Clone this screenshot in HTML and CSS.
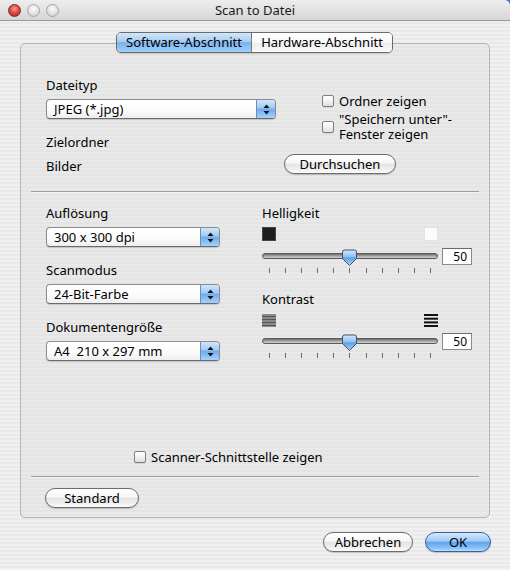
FILE: index.html
```html
<!DOCTYPE html>
<html lang="de">
<head>
<meta charset="utf-8">
<title>Scan to Datei</title>
<link rel="stylesheet" href="styles.css">
</head>
<body>
<div class="window">
  <div class="titlebar">
    <div class="lights">
      <span class="light red"></span>
      <span class="light gray"></span>
      <span class="light gray"></span>
    </div>
    <div class="title">Scan to Datei</div>
    <div></div>
  </div>

  <div class="content">
    <div class="tabs">
      <div class="tab active">Software-Abschnitt</div>
      <div class="tab">Hardware-Abschnitt</div>
    </div>

    <div class="group">
      <div class="sec-top">
        <div class="col-left">
          <div class="label">Dateityp</div>
          <div class="popup wide"><span class="popup-text">JPEG (*.jpg)</span><span class="popup-arrow"><svg width="7" height="11" viewBox="0 0 7 11"><path d="M3.5 0.5 L6.5 4 H0.5 Z M0.5 7 H6.5 L3.5 10.5 Z" fill="#111"/></svg></span></div>
          <div class="label gap15">Zielordner</div>
          <div class="label gap8">Bilder</div>
        </div>
        <div class="col-right">
          <label class="check first"><span class="box"></span><span>Ordner zeigen</span></label>
          <label class="check two"><span class="box"></span><span class="two-line">"Speichern unter"-<br>Fenster zeigen</span></label>
          <button class="btn browse">Durchsuchen</button>
        </div>
      </div>

      <div class="divider"></div>

      <div class="sec-bottom">
        <div class="col-popups">
          <div class="field">
            <div class="label">Auflösung</div>
            <div class="popup"><span class="popup-text">300 x 300 dpi</span><span class="popup-arrow"><svg width="7" height="11" viewBox="0 0 7 11"><path d="M3.5 0.5 L6.5 4 H0.5 Z M0.5 7 H6.5 L3.5 10.5 Z" fill="#111"/></svg></span></div>
          </div>
          <div class="field">
            <div class="label">Scanmodus</div>
            <div class="popup"><span class="popup-text">24-Bit-Farbe</span><span class="popup-arrow"><svg width="7" height="11" viewBox="0 0 7 11"><path d="M3.5 0.5 L6.5 4 H0.5 Z M0.5 7 H6.5 L3.5 10.5 Z" fill="#111"/></svg></span></div>
          </div>
          <div class="field">
            <div class="label">Dokumentengröße</div>
            <div class="popup"><span class="popup-text">A4&nbsp; 210 x 297 mm</span><span class="popup-arrow"><svg width="7" height="11" viewBox="0 0 7 11"><path d="M3.5 0.5 L6.5 4 H0.5 Z M0.5 7 H6.5 L3.5 10.5 Z" fill="#111"/></svg></span></div>
          </div>
        </div>

        <div class="col-sliders">
          <div class="label">Helligkeit</div>
          <div class="icons">
            <span class="sq black"></span>
            <span class="sq white"></span>
          </div>
          <div class="slider-row">
            <div class="slider">
              <div class="track"></div>
              <svg class="knob" width="17" height="18" viewBox="0 0 17 18"><defs><linearGradient id="kg1" x1="0" y1="0" x2="0" y2="1"><stop offset="0" stop-color="#d4e8fb"/><stop offset="0.45" stop-color="#8fc0f0"/><stop offset="0.5" stop-color="#5c9fe6"/><stop offset="1" stop-color="#a6d6ff"/></linearGradient></defs><path d="M3.5 1 H13.5 Q15.5 1 15.5 3 V9.5 L8.5 16.5 L1.5 9.5 V3 Q1.5 1 3.5 1 Z" fill="url(#kg1)" stroke="#3b5370" stroke-width="1"/></svg>
              <div class="ticks"><i></i><i></i><i></i><i></i><i></i><i></i><i></i><i></i><i></i><i></i><i></i></div>
            </div>
            <div class="value">50</div>
          </div>

          <div class="label gap17">Kontrast</div>
          <div class="icons second">
            <svg width="14" height="13" viewBox="0 0 14 13"><rect x="0" y="0" width="14" height="13" fill="#8a8a8a"/><rect x="0" y="2" width="14" height="1" fill="#555"/><rect x="0" y="5" width="14" height="1" fill="#555"/><rect x="0" y="8" width="14" height="1" fill="#555"/><rect x="0" y="11" width="14" height="1" fill="#555"/></svg>
            <svg width="14" height="13" viewBox="0 0 14 13"><rect x="0" y="0" width="14" height="2" fill="#111"/><rect x="0" y="3.7" width="14" height="2" fill="#111"/><rect x="0" y="7.4" width="14" height="2" fill="#111"/><rect x="0" y="11" width="14" height="2" fill="#111"/></svg>
          </div>
          <div class="slider-row">
            <div class="slider">
              <div class="track"></div>
              <svg class="knob" width="17" height="18" viewBox="0 0 17 18"><defs><linearGradient id="kg2" x1="0" y1="0" x2="0" y2="1"><stop offset="0" stop-color="#d4e8fb"/><stop offset="0.45" stop-color="#8fc0f0"/><stop offset="0.5" stop-color="#5c9fe6"/><stop offset="1" stop-color="#a6d6ff"/></linearGradient></defs><path d="M3.5 1 H13.5 Q15.5 1 15.5 3 V9.5 L8.5 16.5 L1.5 9.5 V3 Q1.5 1 3.5 1 Z" fill="url(#kg2)" stroke="#3b5370" stroke-width="1"/></svg>
              <div class="ticks"><i></i><i></i><i></i><i></i><i></i><i></i><i></i><i></i><i></i><i></i><i></i></div>
            </div>
            <div class="value">50</div>
          </div>
        </div>
      </div>

      <label class="check scanner"><span class="box"></span><span>Scanner-Schnittstelle zeigen</span></label>

      <div class="divider lower"></div>

      <div class="std-row">
        <button class="btn standard">Standard</button>
      </div>
    </div>

    <div class="footer">
      <button class="btn cancel">Abbrechen</button>
      <button class="btn ok">OK</button>
    </div>
  </div>
</div>
</body>
</html>
```
FILE: styles.css
```css
* { box-sizing: border-box; }

html, body {
  margin: 0;
  padding: 0;
}

body {
  width: 510px;
  height: 570px;
  overflow: hidden;
  background: #4a79c9;
  font-family: "Noto Sans", "DejaVu Sans", sans-serif;
  font-size: 13px;
  color: #000;
}

.window {
  width: 510px;
  height: 570px;
  display: flex;
  flex-direction: column;
  border-top-right-radius: 6px;
  overflow: hidden;
  background: repeating-linear-gradient(to bottom, #f0f0f0 0, #f0f0f0 2px, #e9e9e9 2px, #e9e9e9 4px);
}

/* title bar */
.titlebar {
  height: 21px;
  flex: none;
  display: grid;
  grid-template-columns: 1fr auto 1fr;
  align-items: center;
  background: linear-gradient(to bottom, #ededed 0%, #e2e2e2 50%, #d6d6d6 100%);
  border-bottom: 1px solid #9a9a9a;
}

.lights {
  display: flex;
  gap: 6px;
  padding-left: 8px;
  align-items: center;
}

.light {
  width: 13px;
  height: 13px;
  border-radius: 50%;
  display: block;
}

.light.red {
  background: radial-gradient(circle at 50% 35%, #f6a0a0 0%, #de4a48 45%, #a5221f 100%);
  border: 1px solid #7d2a28;
}

.light.gray {
  background: radial-gradient(circle at 50% 35%, #fbfbfb 0%, #e3e3e3 50%, #c9c9c9 100%);
  border: 1px solid #a5a5a5;
}

.title {
  font-size: 13px;
  color: #1a1a1a;
  line-height: 16px;
}

/* content */
.content {
  flex: 1;
  display: flex;
  flex-direction: column;
  padding: 11px 19px 0 20px;
}

.tabs {
  align-self: center;
  display: flex;
  height: 21px;
  border: 1px solid #6b6b6b;
  border-radius: 5px;
  overflow: hidden;
  position: relative;
  z-index: 1;
  margin-left: -2px;
  box-shadow: 0 1px 1px rgba(0,0,0,0.15);
}

.tab {
  height: 19px;
  line-height: 18px;
  text-align: center;
  font-size: 13px;
  background: linear-gradient(to bottom, #ffffff 0%, #f8f8f8 50%, #ececec 51%, #fafafa 100%);
}

.tab:first-child { width: 135px; border-right: 1px solid #7a7a7a; }
.tab:last-child { width: 140px; }

.tab.active {
  background: linear-gradient(to bottom, #d2e6fb 0%, #a7cdf3 45%, #7db3ec 50%, #9fd0fb 100%);
}

/* group box */
.group {
  margin-top: -10px;
  margin-right: 1px;
  border: 1px solid #b3b3b3;
  border-radius: 5px;
  background: repeating-linear-gradient(to bottom, #e9e9e9 0, #e9e9e9 2px, #e4e4e4 2px, #e4e4e4 4px);
  padding: 33px 10px 9px 10px;
  display: flex;
  flex-direction: column;
}

.label {
  height: 16px;
  line-height: 16px;
  white-space: nowrap;
}

.gap15 { margin-top: 15px; }
.gap8 { margin-top: 8px; }
.gap17 { margin-top: 17px; }

.sec-top {
  display: flex;
  padding-left: 15px;
  margin-bottom: 17px;
}

.col-left {
  width: 230px;
  display: flex;
  flex-direction: column;
}

.col-left .popup { margin-top: 6px; }

.col-right {
  margin-left: 8px;
  display: flex;
  flex-direction: column;
  align-items: flex-start;
}

/* popups */
.popup {
  height: 20px;
  width: 174px;
  display: flex;
  border: 1px solid #8c8c8c;
  border-bottom-color: #6a6a6a;
  border-radius: 4px;
  overflow: hidden;
  background: linear-gradient(to bottom, #ffffff 0%, #fbfbfb 60%, #eeeeee 100%);
  box-shadow: 0 1px 1px rgba(0,0,0,0.15);
}

.popup.wide { width: 230px; }

.popup-text {
  flex: 1;
  line-height: 18px;
  padding-left: 7px;
  white-space: nowrap;
}

.popup-arrow {
  width: 19px;
  flex: none;
  display: flex;
  align-items: center;
  justify-content: center;
  border-left: 1px solid #6f8fb8;
  background: linear-gradient(to bottom, #d0e5fb 0%, #9fcaf3 45%, #6eaaec 50%, #a3d3ff 100%);
}

/* checkboxes */
.check {
  display: flex;
  align-items: center;
  gap: 5px;
  line-height: 16px;
  white-space: nowrap;
}

.box {
  width: 12px;
  height: 12px;
  flex: none;
  border: 1px solid #7f7f7f;
  border-radius: 2px;
  background: linear-gradient(to bottom, #ffffff 0%, #f2f2f2 50%, #dedede 100%);
  box-shadow: 0 1px 0 rgba(0,0,0,0.08);
}

.col-right .check { margin-left: 38px; }
.check.first { margin-top: 16px; height: 16px; }
.check.two { margin-top: 3px; }
.two-line { line-height: 15px; }

/* buttons */
.btn {
  height: 20px;
  padding: 0;
  font-family: inherit;
  font-size: 13px;
  line-height: 17px;
  color: #000;
  border: 1px solid #6c6c6c;
  border-radius: 10px;
  background: linear-gradient(to bottom, #ffffff 0%, #f6f6f6 45%, #e4e4e4 52%, #f2f2f2 85%, #fdfdfd 100%);
  box-shadow: 0 1px 1px rgba(0,0,0,0.2);
  text-align: center;
}

.browse { margin-top: 12px; width: 112px; }
.standard { width: 94px; }
.cancel { width: 90px; }
.ok {
  width: 66px;
  border-color: #3b5f98;
  background: linear-gradient(to bottom, #d3e8fc 0%, #9ccaf4 45%, #63a3ea 52%, #87c3fb 85%, #b9e2ff 100%);
}

/* dividers */
.divider {
  height: 2px;
  border-top: 1px solid #9f9f9f;
  border-bottom: 1px solid #f5f5f5;
}

/* lower section */
.sec-bottom {
  display: flex;
  margin-top: 12px;
  padding-left: 15px;
}

.col-popups {
  width: 174px;
  display: flex;
  flex-direction: column;
  gap: 15px;
}

.field {
  display: flex;
  flex-direction: column;
  gap: 6px;
}

.col-sliders {
  margin-left: 42px;
  width: 210px;
  display: flex;
  flex-direction: column;
}

.icons {
  width: 176px;
  margin-top: 6px;
  display: flex;
  justify-content: space-between;
}

.icons.second { margin-top: 7px; }

.sq {
  width: 14px;
  height: 14px;
  display: block;
}

.sq.black { background: #1e1e22; border: 1px solid #444; }
.sq.white { background: #fbfbfb; border: 1px solid #e3e3e3; }

.slider-row {
  margin-top: 7px;
  display: flex;
  gap: 4px;
  align-items: flex-start;
}

.icons.second + .slider-row { margin-top: 6px; }

.slider {
  width: 176px;
  height: 26px;
  position: relative;
}

.track {
  position: absolute;
  left: 0;
  right: 0;
  top: 5px;
  height: 6px;
  border-radius: 3px;
  border: 1px solid #5a5a5a;
  background: linear-gradient(to bottom, #6d6d6d 0%, #a5a5a5 50%, #d2d2d2 100%);
}

.knob {
  position: absolute;
  left: 79px;
  top: 1px;
}

.ticks {
  position: absolute;
  left: 7px;
  right: 7px;
  top: 20px;
  height: 5px;
  display: flex;
  justify-content: space-between;
}

.ticks i {
  width: 1px;
  height: 5px;
  background: #6c6c6c;
  display: block;
}

.value {
  width: 30px;
  height: 17px;
  border: 1px solid #8a8a8a;
  border-top-color: #6a6a6a;
  background: #fff;
  text-align: right;
  padding-right: 4px;
  font-size: 12px;
  line-height: 15px;
}

.check.scanner {
  margin-top: 88px;
  margin-left: 103px;
  height: 16px;
}

.divider.lower { margin-top: 11px; }

.std-row {
  margin-top: 10px;
  padding-left: 14px;
  display: flex;
}

.footer {
  margin-top: 14px;
  display: flex;
  justify-content: flex-end;
  gap: 12px;
}
```
